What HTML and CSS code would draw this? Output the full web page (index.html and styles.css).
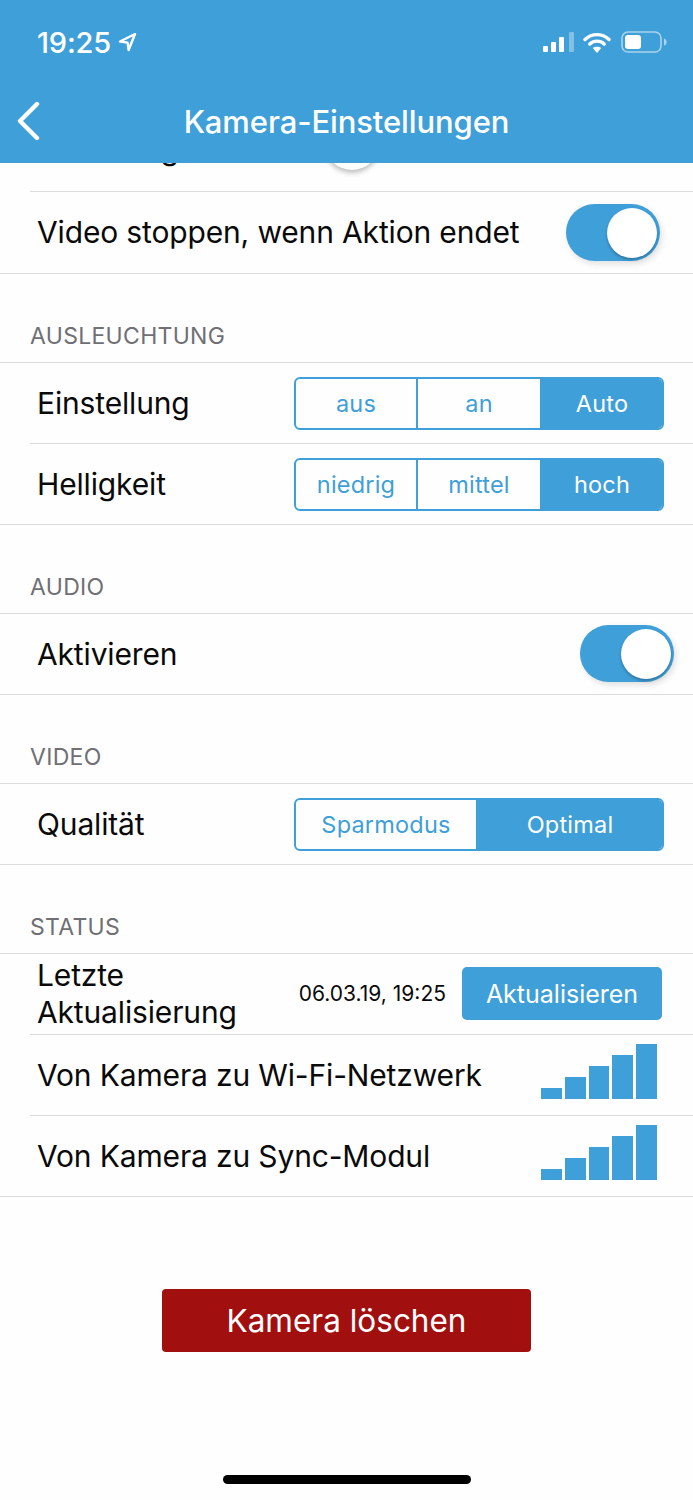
FILE: index.html
```html
<!DOCTYPE html>
<html lang="de">

<head>
    <meta charset="UTF-8">
    <meta name="viewport" content="width=device-width, initial-scale=1.0">
    <title>Kamera-Einstellungen</title>
    <link rel="stylesheet" href="styles.css">
</head>

<body>
    <header class="topbar">
        <div class="status-bar">
            <div class="clock">
                <span>19:25</span>
                <svg class="arrow" width="19" height="20" viewBox="0 0 19 20">
                    <path d="M17 2 L2 9.5 L9.6 10.6 L10.6 18 Z" fill="none" stroke="#fff" stroke-width="2.4" stroke-linejoin="round" />
                </svg>
            </div>
            <div class="status-icons">
                <svg class="signal" width="32" height="20" viewBox="0 0 32 20">
                    <rect x="0" y="14" width="5" height="6" rx="1" fill="#fff" />
                    <rect x="8" y="10" width="5" height="10" rx="1" fill="#fff" />
                    <rect x="16" y="5" width="5" height="15" rx="1" fill="#fff" />
                    <rect x="26" y="0" width="5" height="20" rx="1" fill="#fff" opacity="0.35" />
                </svg>
                <svg width="28" height="21" viewBox="0 0 28 21">
                    <path d="M2 7.5 C9 1 19 1 26 7.5" fill="none" stroke="#fff" stroke-width="3.4" stroke-linecap="round" />
                    <path d="M6.8 12 C11 8.2 17 8.2 21.2 12" fill="none" stroke="#fff" stroke-width="3.4" stroke-linecap="round" />
                    <path d="M14 21 L9.8 16 C12 14.3 16 14.3 18.2 16 Z" fill="#fff" />
                </svg>
                <svg width="46" height="22" viewBox="0 0 46 22">
                    <rect x="1" y="1" width="39" height="20" rx="6" fill="none" stroke="#fff" stroke-width="1.6" opacity="0.55" />
                    <rect x="4" y="4" width="16" height="14" rx="3" fill="#fff" />
                    <path d="M43 7.5 C45 8 45.6 9.5 45.6 11 C45.6 12.5 45 14 43 14.5 Z" fill="#fff" opacity="0.55" />
                </svg>
            </div>
        </div>
        <nav class="nav">
            <svg class="back" width="24" height="40" viewBox="0 0 24 40">
                <path d="M21 3 L4 20 L21 37" fill="none" stroke="#fff" stroke-width="4.4" stroke-linecap="round" stroke-linejoin="round" />
            </svg>
            <h1>Kamera-Einstellungen</h1>
            <span></span>
        </nav>
    </header>

    <main>
        <div class="row-clip">
            <div class="row-clip-inner">
                <span class="label">Videolänge</span>
                <span class="slider-thumb"></span>
            </div>
        </div>

        <div class="row row-last row-first">
            <span class="label">Video stoppen, wenn Aktion endet</span>
            <span class="toggle toggle-video"></span>
        </div>

        <h2 class="section-title">AUSLEUCHTUNG</h2>
        <div class="row">
            <span class="label">Einstellung</span>
            <div class="segments">
                <span>aus</span>
                <span>an</span>
                <span class="on">Auto</span>
            </div>
        </div>
        <div class="row row-last">
            <span class="label">Helligkeit</span>
            <div class="segments">
                <span>niedrig</span>
                <span>mittel</span>
                <span class="on">hoch</span>
            </div>
        </div>

        <h2 class="section-title">AUDIO</h2>
        <div class="row row-last">
            <span class="label">Aktivieren</span>
            <span class="toggle toggle-audio"></span>
        </div>

        <h2 class="section-title">VIDEO</h2>
        <div class="row row-last">
            <span class="label">Qualität</span>
            <div class="segments segments-two">
                <span>Sparmodus</span>
                <span class="on">Optimal</span>
            </div>
        </div>

        <h2 class="section-title">STATUS</h2>
        <div class="row">
            <span class="label label-wrap">Letzte Aktualisierung</span>
            <div class="update">
                <span class="date">06.03.19, 19:25</span>
                <button type="button" class="update-btn">Aktualisieren</button>
            </div>
        </div>
        <div class="row">
            <span class="label">Von Kamera zu Wi-Fi-Netzwerk</span>
            <div class="bars"><i></i><i></i><i></i><i></i><i></i></div>
        </div>
        <div class="row row-last">
            <span class="label">Von Kamera zu Sync-Modul</span>
            <div class="bars"><i></i><i></i><i></i><i></i><i></i></div>
        </div>

        <div class="delete-wrap">
            <button type="button" class="delete-btn">Kamera löschen</button>
        </div>
    </main>

    <div class="home-bar"></div>
</body>

</html>
```

FILE: styles.css
```css
* {
    box-sizing: border-box;
}

body {
    margin: 0;
    height: 1500px;
    overflow: hidden;
    background: #fefefe;
    color: #0a0a0a;
    font-family: Inter, "Liberation Sans", sans-serif;
}

.topbar {
    height: 163px;
    background: #3f9fd8;
    color: #fff;
    position: relative;
    z-index: 1;
}

.status-bar {
    height: 84px;
    display: flex;
    justify-content: space-between;
    align-items: center;
    padding: 0 26px 0 37px;
}

.clock {
    display: flex;
    align-items: center;
    gap: 7px;
    font-size: 29px;
    font-weight: 500;
    letter-spacing: -0.2px;
}

.status-icons {
    display: flex;
    align-items: center;
    gap: 10px;
}

.signal {
    margin-right: -2px;
}

.nav {
    height: 79px;
    display: grid;
    grid-template-columns: 1fr auto 1fr;
    align-items: center;
    padding: 0 16px 5px;
}

.nav h1 {
    margin: 0;
    font-size: 31px;
    font-weight: 500;
    letter-spacing: -0.1px;
}

.row-clip {
    height: 29px;
    margin-left: 30px;
    border-bottom: 1px solid #dcdcdc;
    overflow: hidden;
}

.row-clip-inner {
    height: 81px;
    margin-top: -54px;
    padding-left: 8px;
    display: flex;
    align-items: center;
    position: relative;
}

.slider-thumb {
    position: absolute;
    left: 294px;
    top: 5px;
    width: 56px;
    height: 56px;
    border-radius: 50%;
    background: #fff;
    box-shadow: 0 3px 5px rgba(0, 0, 0, 0.25);
}

.row {
    height: 81px;
    margin-left: 30px;
    padding: 0 29px 0 7px;
    border-bottom: 1px solid #dcdcdc;
    display: flex;
    justify-content: space-between;
    align-items: center;
}

.row-first {
    height: 82px;
}

.row-last {
    margin-left: 0;
    padding-left: 37px;
}

.label {
    font-size: 30px;
    line-height: 37px;
    letter-spacing: -0.15px;
}

.label-wrap {
    width: 230px;
}

.section-title {
    height: 89px;
    margin: 0;
    padding: 0 0 13px 30px;
    display: flex;
    align-items: flex-end;
    border-bottom: 1px solid #dcdcdc;
    color: #6f6f74;
    font-size: 23px;
    font-weight: 400;
    line-height: 26px;
    letter-spacing: 0.3px;
}

.toggle {
    width: 94px;
    height: 57px;
    border-radius: 29px;
    background: #3f9fd8;
    display: flex;
    justify-content: flex-end;
    align-items: center;
    padding-right: 3px;
    box-shadow: 2px 3px 6px rgba(0, 0, 0, 0.12);
}

.toggle::after {
    content: "";
    width: 50px;
    height: 50px;
    border-radius: 50%;
    background: #fff;
    box-shadow: 0 2px 3px rgba(0, 0, 0, 0.25);
}

.toggle-video {
    margin-right: 4px;
}

.toggle-audio {
    margin: 0 -10px 1px 0;
}

.segments {
    width: 370px;
    height: 53px;
    display: grid;
    grid-template-columns: 122px 124px 1fr;
    border: 2px solid #3f9fd8;
    border-radius: 6px;
    overflow: hidden;
    color: #3f9fd8;
    font-size: 23.5px;
    letter-spacing: 0.2px;
}

.segments-two {
    grid-template-columns: 182px 1fr;
}

.segments span {
    display: flex;
    justify-content: center;
    align-items: center;
    padding-top: 1px;
    border-right: 2px solid #3f9fd8;
}

.segments span.on {
    background: #3f9fd8;
    color: #fff;
    border-right: 0;
}

.update {
    display: flex;
    align-items: center;
    gap: 16px;
    margin: 0 2px 1px 0;
}

.date {
    font-size: 21px;
}

.update-btn {
    width: 200px;
    height: 53px;
    border: 0;
    border-radius: 5px;
    background: #3f9fd8;
    color: #fff;
    font-family: inherit;
    font-size: 25px;
}

.bars {
    display: flex;
    align-items: flex-end;
    gap: 3px;
    height: 55px;
    margin: 0 7px 8px 0;
}

.bars i {
    width: 20.8px;
    background: #3f9fd8;
}

.bars i:nth-child(1) {
    height: 11px;
}

.bars i:nth-child(2) {
    height: 22px;
}

.bars i:nth-child(3) {
    height: 33px;
}

.bars i:nth-child(4) {
    height: 44px;
}

.bars i:nth-child(5) {
    height: 55px;
}

.delete-wrap {
    display: flex;
    justify-content: center;
    padding-top: 92px;
}

.delete-btn {
    width: 369px;
    height: 63px;
    border: 0;
    border-radius: 4px;
    background: #a20f0f;
    color: #fff;
    font-family: inherit;
    font-size: 31.5px;
}

.home-bar {
    width: 248px;
    height: 9px;
    margin: 123px auto 0 223px;
    border-radius: 5px;
    background: #000;
}
```
